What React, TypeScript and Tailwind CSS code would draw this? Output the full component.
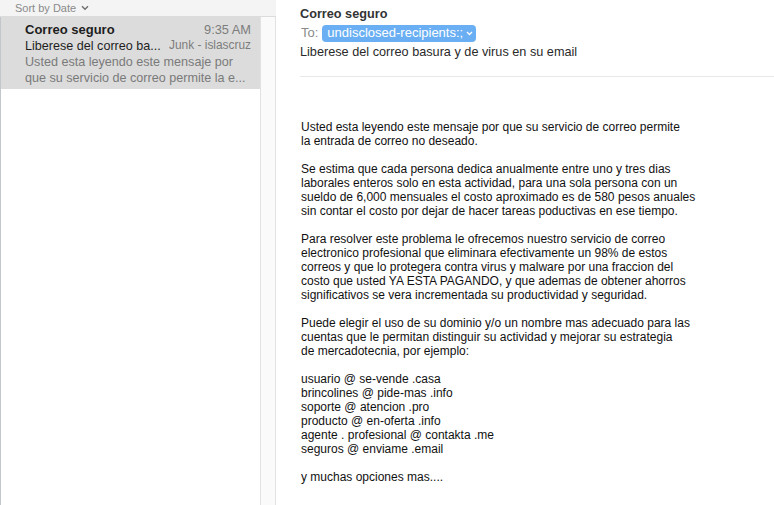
import React from "react";

const font = { fontFamily: '"Liberation Sans", Arial, sans-serif' };

export default function App() {
  const body: string[][] = [
    [
      "Usted esta leyendo este mensaje por que su servicio de correo permite",
      "la entrada de correo no deseado.",
    ],
    [
      "Se estima que cada persona dedica anualmente entre uno y tres dias",
      "laborales enteros solo en esta actividad, para una sola persona con un",
      "sueldo de 6,000 mensuales el costo aproximado es de 580 pesos anuales",
      "sin contar el costo por dejar de hacer tareas poductivas en ese tiempo.",
    ],
    [
      "Para resolver este problema le ofrecemos nuestro servicio de correo",
      "electronico profesional que eliminara efectivamente un 98% de estos",
      "correos y que lo protegera contra virus y malware por una fraccion del",
      "costo que usted YA ESTA PAGANDO, y que ademas de obtener ahorros",
      "significativos se vera incrementada su productividad y seguridad.",
    ],
    [
      "Puede elegir el uso de su dominio y/o un nombre mas adecuado para las",
      "cuentas que le permitan distinguir su actividad y mejorar su estrategia",
      "de mercadotecnia, por ejemplo:",
    ],
    [
      "usuario @ se-vende .casa",
      "brincolines @ pide-mas .info",
      "soporte @ atencion .pro",
      "producto @ en-oferta .info",
      "agente . profesional @ contakta .me",
      "seguros @ enviame .email",
    ],
    ["y muchas opciones mas...."],
  ];

  return (
    <div className="flex h-[505px] w-[774px] overflow-hidden bg-white" style={font}>
      {/* Left list column + scrollbar */}
      <div className="flex w-[276px] shrink-0 flex-col">
        <div className="flex h-[17px] items-center border-b border-[#dcdcdc] bg-[#f4f4f4] pl-[15px] text-[11px] text-[#8a8a8a]">
          <span>Sort by Date</span>
          <svg className="ml-[5px]" width="8" height="6" viewBox="0 0 8 6">
            <path d="M1 1.2 L4 4.2 L7 1.2" fill="none" stroke="#6f6f6f" strokeWidth="1.4" />
          </svg>
        </div>
        <div className="flex flex-1">
          <div className="w-[260px] border-l border-[#c3c7cc] bg-white">
            <div className="h-[72px] bg-[#dcdcdc] pl-[24px] pr-[9px] pt-[4px]">
              <div className="flex h-[17px] items-center justify-between">
                <span className="text-[13px] font-bold text-[#1e1e1e]">Correo seguro</span>
                <span className="text-[12.8px] text-[#7d7d7d]">9:35 AM</span>
              </div>
              <div className="flex h-[16px] items-center justify-between">
                <span className="text-[12.6px] text-[#1e1e1e]">Liberese del correo ba...</span>
                <span className="text-[11.9px] text-[#7d7d7d]">Junk - islascruz</span>
              </div>
              <div className="text-[12.6px] leading-[16px] text-[#7a7a7a]">
                <div>Usted esta leyendo este mensaje por</div>
                <div className="whitespace-nowrap">que su servicio de correo permite la e...</div>
              </div>
            </div>
          </div>
          <div className="w-[16px] border-l border-r border-[#e2e2e2] bg-[#fafafa]" />
        </div>
      </div>

      {/* Right message pane */}
      <div className="flex flex-1 flex-col pl-[24px]">
        <div className="pt-[6px]">
          <div className="h-[17px] text-[12.7px] font-bold leading-[17px] text-[#333333]">Correo seguro</div>
          <div className="mt-[1px] flex h-[18px] items-center">
            <span className="pl-[1px] text-[13px] text-[#8a8a8a]">To:</span>
            <span className="ml-[4px] flex h-[17px] items-center rounded-[4px] bg-[#6aaff3] pl-[5px] pr-[3px] text-[13px] text-white">
              undisclosed-recipients:;
              <svg className="ml-[3px]" width="7" height="5" viewBox="0 0 7 5">
                <path d="M1 1 L3.5 3.5 L6 1" fill="none" stroke="#ffffff" strokeWidth="1.3" />
              </svg>
            </span>
          </div>
          <div className="mt-[1px] h-[18px] text-[12.7px] leading-[18px] text-[#2a2a2a]">
            Liberese del correo basura y de virus en su email
          </div>
        </div>
        <div className="mt-[15px] h-px w-full bg-[#e8e9eb]" />
        <div className="pl-[1px] pt-[43px] text-[12px] leading-[14px] text-[#111111]">
          {body.map((para, i) => (
            <div key={i} className="mb-[14px]">
              {para.map((line, j) => (
                <div key={j}>{line}</div>
              ))}
            </div>
          ))}
        </div>
      </div>
    </div>
  );
}
